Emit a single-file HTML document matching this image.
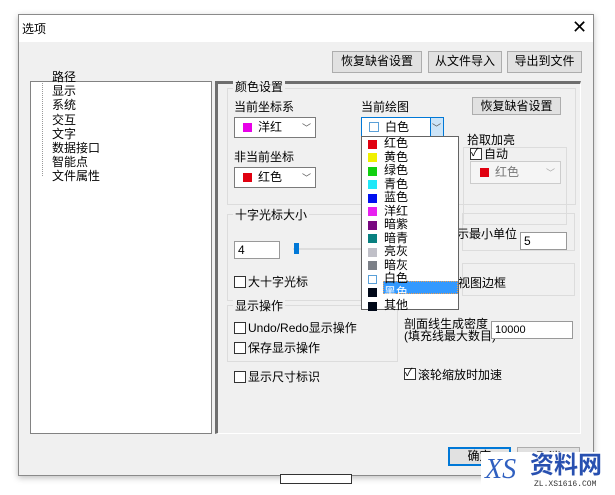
<!DOCTYPE html>
<html><head><meta charset="utf-8"><style>
*{box-sizing:border-box;margin:0;padding:0}
body{width:615px;height:495px;background:#fff;position:relative;overflow:hidden;font-family:"Liberation Sans","Noto Sans CJK SC",sans-serif;font-size:12px;color:#000}
.a{position:absolute}
.t{position:absolute;white-space:nowrap;line-height:14px}
.btn{position:absolute;background:#e1e1e1;border:1px solid #adadad;text-align:center;line-height:18px}
.cb{position:absolute;background:#fff;border:1px solid #7a7a7a}
.chk{position:absolute;width:12px;height:12px;border:1px solid #333;background:#fff}
.grp{position:absolute;border:1px solid #dcdcdc}
.sw{position:absolute;width:9px;height:9px}
.ar{position:absolute;font-size:9px;color:#555}
</style></head><body>
<div class="a" style="left:18px;top:14px;width:576px;height:462px;background:#f0f0f0;border:1px solid #8a8a8a;box-shadow:0 2px 6px rgba(0,0,0,.25)"></div>
<div class="a" style="left:19px;top:15px;width:574px;height:27px;background:#fff"></div>
<div class="t" style="left:22px;top:22px">选项</div>
<div class="t" style="left:572px;top:17px;font-size:18px;line-height:20px">✕</div>

<div class="btn" style="left:332px;top:51px;width:90px;height:22px">恢复缺省设置</div>
<div class="btn" style="left:428px;top:51px;width:74px;height:22px">从文件导入</div>
<div class="btn" style="left:507px;top:51px;width:75px;height:22px">导出到文件</div>

<div class="a" style="left:30px;top:81px;width:182px;height:353px;background:#fff;border:1px solid #828282"></div>
<div class="a" style="left:42px;top:83px;width:1px;height:93px;border-left:1px dotted #999"></div>
<div class="t" style="left:52px;top:70px;line-height:14.2px">路径<br>显示<br>系统<br>交互<br>文字<br>数据接口<br>智能点<br>文件属性</div>

<div class="a" style="left:215px;top:81px;width:366px;height:353px;border:1px solid #fff;border-left:3px solid #6e6e6e;border-top:3px solid #6e6e6e"></div>

<div class="grp" style="left:227px;top:88px;width:349px;height:117px"></div>
<div class="t" style="left:233px;top:80px;background:#f0f0f0;padding:0 2px">颜色设置</div>
<div class="t" style="left:234px;top:100px">当前坐标系</div>
<div class="cb" style="left:234px;top:117px;width:82px;height:21px"></div>
<div class="sw" style="left:243px;top:123px;background:#e800e8"></div>
<div class="t" style="left:258px;top:120px">洋红</div>
<div class="ar" style="left:302px;top:121px">﹀</div>

<div class="t" style="left:234px;top:150px">非当前坐标</div>
<div class="cb" style="left:234px;top:167px;width:82px;height:21px"></div>
<div class="sw" style="left:243px;top:173px;background:#e00010"></div>
<div class="t" style="left:258px;top:170px">红色</div>
<div class="ar" style="left:302px;top:171px">﹀</div>

<div class="t" style="left:361px;top:100px">当前绘图</div>
<div class="cb" style="left:361px;top:117px;width:83px;height:21px;border-color:#0078d7"></div>
<div class="a" style="left:430px;top:118px;width:13px;height:19px;background:#cce4f7;border-left:1px solid #0078d7"></div>
<div class="ar" style="left:432px;top:121px">﹀</div>
<div class="a" style="left:369px;top:122px;width:10px;height:10px;border:1px solid #5aa0d8;background:#fff"></div>
<div class="t" style="left:385px;top:120px">白色</div>

<div class="btn" style="left:472px;top:97px;width:89px;height:18px;line-height:16px">恢复缺省设置</div>
<div class="grp" style="left:463px;top:147px;width:104px;height:78px"></div>
<div class="t" style="left:466px;top:133px;background:#f0f0f0;padding:0 1px">拾取加亮</div>
<div class="chk" style="left:470px;top:148px"></div>
<div class="t" style="left:471px;top:146px;font-size:11px">✓</div>
<div class="t" style="left:484px;top:147px">自动</div>
<div class="a" style="left:470px;top:161px;width:91px;height:23px;border:1px solid #ccc;background:#f5f5f5"></div>
<div class="sw" style="left:480px;top:168px;background:#e00010"></div>
<div class="t" style="left:495px;top:165px;color:#777">红色</div>
<div class="ar" style="left:546px;top:166px;color:#aaa">﹀</div>

<div class="grp" style="left:227px;top:214px;width:171px;height:87px"></div>
<div class="t" style="left:233px;top:208px;background:#f0f0f0;padding:0 2px">十字光标大小</div>
<div class="cb" style="left:234px;top:241px;width:46px;height:18px;border-color:#999"></div>
<div class="t" style="left:238px;top:243px">4</div>
<div class="a" style="left:293px;top:248px;width:70px;height:2px;background:#ddd"></div>
<div class="a" style="left:294px;top:243px;width:5px;height:11px;background:#0078d7"></div>
<div class="chk" style="left:234px;top:276px"></div>
<div class="t" style="left:248px;top:275px">大十字光标</div>

<div class="grp" style="left:462px;top:213px;width:113px;height:38px"></div>
<div class="t" style="left:457px;top:227px">示最小单位</div>
<div class="cb" style="left:520px;top:232px;width:47px;height:18px;border-color:#999"></div>
<div class="t" style="left:524px;top:234px">5</div>
<div class="grp" style="left:462px;top:263px;width:113px;height:33px"></div>
<div class="t" style="left:458px;top:276px">视图边框</div>

<div class="grp" style="left:227px;top:305px;width:171px;height:57px"></div>
<div class="t" style="left:233px;top:299px;background:#f0f0f0;padding:0 2px">显示操作</div>
<div class="chk" style="left:234px;top:322px"></div>
<div class="t" style="left:248px;top:321px">Undo/Redo显示操作</div>
<div class="chk" style="left:234px;top:342px"></div>
<div class="t" style="left:248px;top:341px">保存显示操作</div>
<div class="chk" style="left:234px;top:371px"></div>
<div class="t" style="left:248px;top:370px">显示尺寸标识</div>

<div class="t" style="left:404px;top:318px;line-height:12px">剖面线生成密度<br>(填充线最大数目)</div>
<div class="cb" style="left:491px;top:321px;width:82px;height:18px;border-color:#999"></div>
<div class="t" style="left:495px;top:323px;font-size:11px">10000</div>
<div class="chk" style="left:404px;top:368px"></div>
<div class="t" style="left:405px;top:366px;font-size:11px">✓</div>
<div class="t" style="left:418px;top:368px">滚轮缩放时加速</div>

<div class="btn" style="left:448px;top:447px;width:63px;height:19px;border:2px solid #0078d7;line-height:15px">确定</div>
<div class="btn" style="left:517px;top:447px;width:63px;height:19px">取消</div>

<div class="a" style="left:361px;top:136px;width:98px;height:174px;background:#fff;border:1px solid #646464"></div>
<div class="a" style="left:383px;top:281px;width:75px;height:13px;background:#3399ff;border:1px dotted #f0a050"></div>
<div class="sw" style="left:368px;top:140px;background:#e00010"></div>
<div class="sw" style="left:368px;top:153px;background:#f0f000"></div>
<div class="sw" style="left:368px;top:167px;background:#10d010"></div>
<div class="sw" style="left:368px;top:180px;background:#20e8f8"></div>
<div class="sw" style="left:368px;top:194px;background:#0010f0"></div>
<div class="sw" style="left:368px;top:207px;background:#e820f0"></div>
<div class="sw" style="left:368px;top:221px;background:#780880"></div>
<div class="sw" style="left:368px;top:234px;background:#088080"></div>
<div class="sw" style="left:368px;top:248px;background:#c0c0c8"></div>
<div class="sw" style="left:368px;top:261px;background:#7c8088"></div>
<div class="a" style="left:368px;top:275px;width:9px;height:9px;border:1px solid #5aa0d8;background:#fff"></div>
<div class="sw" style="left:368px;top:288px;background:#000818"></div>
<div class="sw" style="left:368px;top:302px;background:#000818"></div>
<div class="t" style="left:384px;top:137px;line-height:13.5px">红色<br>黄色<br>绿色<br>青色<br>蓝色<br>洋红<br>暗紫<br>暗青<br>亮灰<br>暗灰<br>白色<br><span style="color:#fff">黑色</span><br>其他</div>

<div class="a" style="left:280px;top:474px;width:72px;height:10px;border:1px solid #333;background:#fff"></div>
<div class="a" style="left:481px;top:452px;width:130px;height:42px;background:#fff"></div>
<div class="t" style="left:485px;top:455px;font-size:28px;line-height:30px;font-style:italic;color:#3060c0;font-family:'Liberation Serif',serif">XS</div>
<div class="t" style="left:530px;top:452px;font-size:24px;line-height:28px;color:#2850b0;font-weight:bold">资料网</div>
<div class="t" style="left:534px;top:480px;font-size:8px;line-height:9px;color:#333;font-family:'Liberation Mono',monospace">ZL.XS1616.COM</div>
</body></html>
